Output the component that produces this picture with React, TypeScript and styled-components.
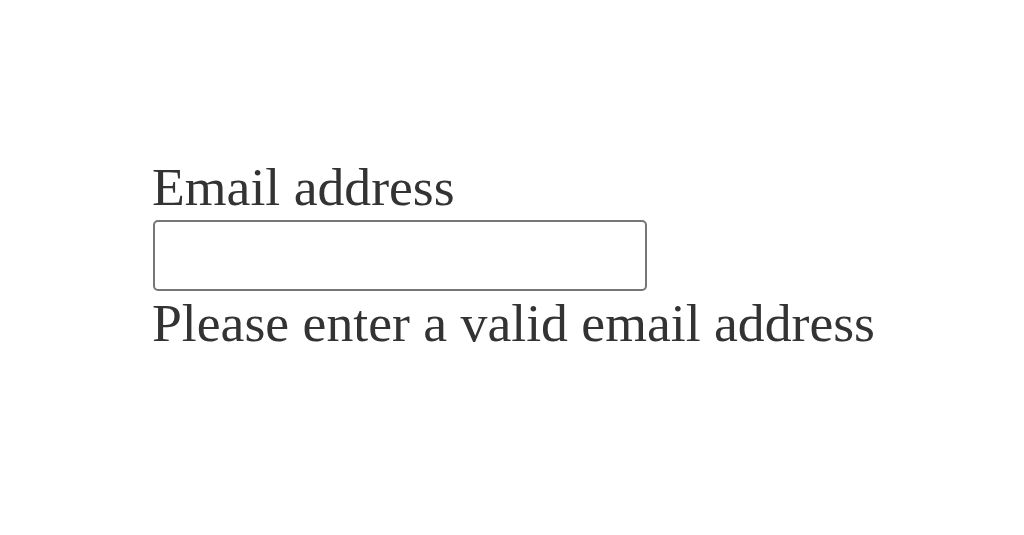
import styled, { createGlobalStyle } from "styled-components";

const GlobalStyle = createGlobalStyle`
  html, body {
    margin: 0;
    padding: 0;
    background: #ffffff;
  }
`;

const Page = styled.div`
  min-height: 535px;
  padding: 158px 0 0 152px;
  box-sizing: border-box;
  font-family: "Liberation Serif", "Times New Roman", serif;
  font-size: 53.7px;
  color: #333333;
`;

const Field = styled.div`
  display: flex;
  flex-direction: column;
  align-items: flex-start;
`;

const Label = styled.label`
  display: block;
  line-height: 59.5px;
`;

const Input = styled.input`
  box-sizing: border-box;
  width: 494px;
  height: 71px;
  margin: 2px 0 3px 1px;
  border: 2px solid #767676;
  border-radius: 5px;
  background: #ffffff;
  font: inherit;
  outline: none;
`;

const ErrorText = styled.span`
  display: block;
  line-height: 59.5px;
`;

export default function App() {
  return (
    <>
      <GlobalStyle />
      <Page>
        <Field>
          <Label htmlFor="email">Email address</Label>
          <Input id="email" type="email" />
          <ErrorText>Please enter a valid email address</ErrorText>
        </Field>
      </Page>
    </>
  );
}
